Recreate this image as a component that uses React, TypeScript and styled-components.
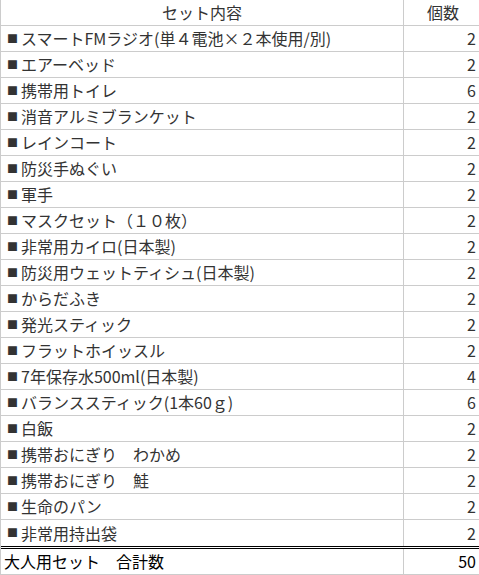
import React from 'react';
import styled, { createGlobalStyle } from 'styled-components';

const GlobalStyle = createGlobalStyle`
  html, body {
    margin: 0;
    padding: 0;
    background: #ffffff;
  }

  body {
    font-family: 'Noto Sans CJK JP', 'Noto Sans', sans-serif;
    font-size: 16px;
    color: #333333;
  }
`;

type SetItem = {
  name: string;
  count: number;
};

const ITEMS: SetItem[] = [
  { name: 'スマートFMラジオ(単４電池×２本使用/別)', count: 2 },
  { name: 'エアーベッド', count: 2 },
  { name: '携帯用トイレ', count: 6 },
  { name: '消音アルミブランケット', count: 2 },
  { name: 'レインコート', count: 2 },
  { name: '防災手ぬぐい', count: 2 },
  { name: '軍手', count: 2 },
  { name: 'マスクセット（１０枚）', count: 2 },
  { name: '非常用カイロ(日本製)', count: 2 },
  { name: '防災用ウェットティシュ(日本製)', count: 2 },
  { name: 'からだふき', count: 2 },
  { name: '発光スティック', count: 2 },
  { name: 'フラットホイッスル', count: 2 },
  { name: '7年保存水500ml(日本製)', count: 4 },
  { name: 'バランススティック(1本60ｇ)', count: 6 },
  { name: '白飯', count: 2 },
  { name: '携帯おにぎり　わかめ', count: 2 },
  { name: '携帯おにぎり　鮭', count: 2 },
  { name: '生命のパン', count: 2 },
  { name: '非常用持出袋', count: 2 },
];

const App = () => {
  const total = ITEMS.reduce((sum, item) => sum + item.count, 0);

  return (
    <>
      <GlobalStyle />
      <S.Table>
        <S.HeaderRow>
          <S.HeaderCell>セット内容</S.HeaderCell>
          <S.HeaderCell>個数</S.HeaderCell>
        </S.HeaderRow>
        {ITEMS.map((item, index) => (
          <S.Row key={item.name} $isLast={index === ITEMS.length - 1}>
            <S.NameCell>
              <S.Bullet>■</S.Bullet>
              {item.name}
            </S.NameCell>
            <S.CountCell>{item.count}</S.CountCell>
          </S.Row>
        ))}
        <S.TotalRow>
          <S.TotalLabel>大人用セット　合計数</S.TotalLabel>
          <S.TotalCount>{total}</S.TotalCount>
        </S.TotalRow>
      </S.Table>
    </>
  );
};

export default App;

const S = {
  Table: styled.div`
    width: 481px;
    border-left: 1px solid #cccccc;
    border-right: 1px solid #cccccc;
  `,

  HeaderRow: styled.div`
    display: grid;
    grid-template-columns: 403px 1fr;
    height: 26px;
    box-sizing: border-box;
    border-bottom: 1px solid #cccccc;
  `,

  HeaderCell: styled.div`
    display: flex;
    align-items: center;
    justify-content: center;

    padding-bottom: 2px;
    line-height: 1;

    &:first-child {
      border-right: 1px solid #cccccc;
    }
  `,

  Row: styled.div<{ $isLast: boolean }>`
    display: grid;
    grid-template-columns: 403px 1fr;
    height: 26px;
    box-sizing: border-box;
    border-bottom: ${({ $isLast }) => ($isLast ? 'none' : '1px solid #cccccc')};
  `,

  NameCell: styled.div`
    display: flex;
    align-items: center;

    padding-left: 6px;
    padding-bottom: 1px;
    border-right: 1px solid #cccccc;

    line-height: 1;
    white-space: nowrap;
  `,

  Bullet: styled.span`
    display: inline-block;
    width: 14px;

    font-size: 11px;
    color: #333333;
  `,

  CountCell: styled.div`
    display: flex;
    align-items: center;
    justify-content: flex-end;

    padding-right: 6px;
    padding-bottom: 1px;
    line-height: 1;
  `,

  TotalRow: styled.div`
    display: grid;
    grid-template-columns: 403px 1fr;
    height: 29px;
    box-sizing: border-box;
    border-top: 3px double #000000;
    border-bottom: 1px solid #cccccc;

    color: #000000;
  `,

  TotalLabel: styled.div`
    display: flex;
    align-items: center;

    padding-left: 3px;
    padding-bottom: 1px;
    border-right: 1px solid #cccccc;
    line-height: 1;
  `,

  TotalCount: styled.div`
    display: flex;
    align-items: center;
    justify-content: flex-end;

    padding-right: 6px;
    padding-bottom: 1px;
    line-height: 1;
  `,
};
